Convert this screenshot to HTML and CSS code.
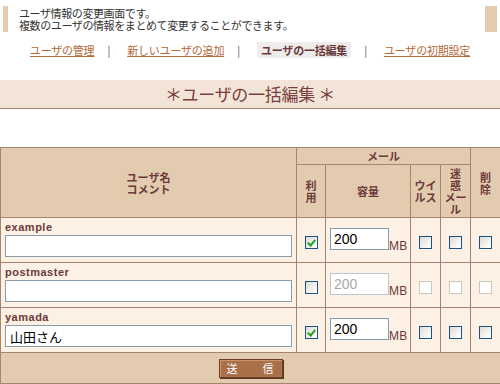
FILE: index.html
```html
<!DOCTYPE html>
<html lang="ja">
<head>
<meta charset="utf-8">
<link rel="stylesheet" href="styles.css">
</head>
<body>
<div class="desc">
  <p>ユーザ情報の変更画面です。<br>複数のユーザの情報をまとめて変更することができます。</p>
</div>
<nav class="nav">
  <a href="#" class="link">ユーザの管理</a><span class="sep">|</span>
  <a href="#" class="link">新しいユーザの追加</a><span class="sep">|</span>
  <span class="current">ユーザの一括編集</span><span class="sep">|</span>
  <a href="#" class="link">ユーザの初期設定</a>
</nav>
<h1 class="title">＊ユーザの一括編集 ＊</h1>
<table class="grid">
  <colgroup>
    <col class="c-name"><col class="c-use"><col class="c-cap"><col class="c-vir"><col class="c-spam"><col class="c-del">
  </colgroup>
  <thead>
    <tr class="h1">
      <th rowspan="2">ユーザ名<br>コメント</th>
      <th colspan="4">メール</th>
      <th rowspan="2">削<br>除</th>
    </tr>
    <tr class="h2">
      <th>利<br>用</th>
      <th>容量</th>
      <th>ウイ<br>ルス</th>
      <th>迷<br>惑<br>メー<br>ル</th>
    </tr>
  </thead>
  <tbody>
    <tr>
      <td class="namecell"><div class="uname">example</div><input class="comment" type="text" value=""></td>
      <td class="ck"><input type="checkbox" checked></td>
      <td class="cap"><input class="capin" type="text" value="200"><span class="mb">MB</span></td>
      <td class="ck"><input type="checkbox"></td>
      <td class="ck"><input type="checkbox"></td>
      <td class="ck"><input type="checkbox"></td>
    </tr>
    <tr>
      <td class="namecell"><div class="uname">postmaster</div><input class="comment" type="text" value=""></td>
      <td class="ck"><input type="checkbox"></td>
      <td class="cap"><input class="capin" type="text" value="200" disabled><span class="mb">MB</span></td>
      <td class="ck"><input type="checkbox" disabled></td>
      <td class="ck"><input type="checkbox" disabled></td>
      <td class="ck"><input type="checkbox" disabled></td>
    </tr>
    <tr>
      <td class="namecell"><div class="uname">yamada</div><input class="comment" type="text" value="山田さん"></td>
      <td class="ck"><input type="checkbox" checked></td>
      <td class="cap"><input class="capin" type="text" value="200"><span class="mb">MB</span></td>
      <td class="ck"><input type="checkbox"></td>
      <td class="ck"><input type="checkbox"></td>
      <td class="ck"><input type="checkbox"></td>
    </tr>
  </tbody>
  <tfoot>
    <tr>
      <td colspan="6" class="foot"><button class="send" type="button">送　　信</button></td>
    </tr>
  </tfoot>
</table>
</body>
</html>
```

FILE: styles.css
```css
html, body {
  margin: 0;
  padding: 0;
  background: #fff;
}
body {
  font-family: "Noto Sans CJK JP", "Liberation Sans", sans-serif;
  font-size: 11px;
  color: #333;
}
.desc {
  margin: 6px 3px 0 3px;
  border-left: 5px solid #e3cbb0;
  border-right: 12px solid #e3cbb0;
  height: 26px;
  padding-left: 11px;
}
.desc p {
  margin: 0;
  padding-top: 1px;
  line-height: 12px;
  font-size: 11px;
  color: #333;
  letter-spacing: -0.4px;
}
.nav {
  display: flex;
  justify-content: center;
  align-items: center;
  margin-top: 10px;
  height: 16px;
  font-size: 11px;
  letter-spacing: -0.2px;
}
.link {
  color: #b5693b;
  text-decoration: underline;
}
.sep {
  color: #555;
  margin: 0 17px 0 13px;
}
.current {
  background: #efedeb;
  color: #6b3a3a;
  font-weight: bold;
  padding: 1px 4px;
  line-height: 14px;
}
.title {
  margin: 22px 0 0 0;
  height: 28px;
  background: #f2e4d6;
  border-bottom: 1px solid #a08a75;
  color: #7a4040;
  font-size: 17px;
  font-weight: normal;
  line-height: 28px;
  text-align: center;
  letter-spacing: -0.3px;
}
.grid {
  margin-top: 38px;
  width: 500px;
  border-collapse: collapse;
  table-layout: fixed;
}
.c-name { width: 296px; }
.c-use { width: 29px; }
.c-cap { width: 85px; }
.c-vir { width: 30px; }
.c-spam { width: 30px; }
.c-del { width: 30px; }
.grid th, .grid td {
  border: 1px solid #a48670;
  padding: 0;
}
.grid th {
  background: #e3cbb0;
  color: #6b3a3a;
  font-size: 11px;
  font-weight: bold;
  line-height: 12px;
  text-align: center;
  vertical-align: middle;
}
.h1 th { height: 16px; }
.h2 th { height: 52px; }
.grid td {
  background: #fdf1e5;
  vertical-align: middle;
  height: 44px;
}
.namecell {
  padding: 0 4px !important;
}
.uname {
  font-family: "Liberation Sans", sans-serif;
  font-weight: bold;
  font-size: 11px;
  letter-spacing: 0.5px;
  color: #6b3a3a;
  line-height: 13px;
  margin-top: -2px;
}
.comment {
  display: block;
  box-sizing: border-box;
  width: 287px;
  height: 22px;
  margin: 1px 0 0 0;
  border: 1px solid #8a9caa;
  padding: 1px 4px;
  font-family: "Noto Sans CJK JP", sans-serif;
  font-size: 13px;
  color: #000;
  background: #fff;
  outline: none;
}
.ck {
  text-align: center;
}
.ck input {
  appearance: none;
  -webkit-appearance: none;
  width: 13px;
  height: 13px;
  margin: 3px 0 0 0;
  box-sizing: border-box;
  border: 1px solid #1c5180;
  background: linear-gradient(135deg, #dcdcd7 0%, #f6f6f3 70%, #fff 100%);
  vertical-align: middle;
  position: relative;
}
.ck input:checked::after {
  content: "";
  position: absolute;
  left: 3px;
  top: 1px;
  width: 3px;
  height: 6px;
  border: solid #21a121;
  border-width: 0 2px 2px 0;
  transform: rotate(40deg);
}
.ck input:disabled {
  border-color: #cac8bb;
  background: #fff;
}
.cap {
  white-space: nowrap;
  padding-left: 4px !important;
}
.capin {
  box-sizing: border-box;
  width: 59px;
  height: 22px;
  margin: 0;
  border: 1px solid #8a9caa;
  padding: 0 3px;
  font-family: "Liberation Sans", sans-serif;
  font-size: 14px;
  color: #000;
  background: #fff;
  vertical-align: middle;
  outline: none;
}
.capin:disabled {
  color: #a9a9a9;
  border-color: #c0c4c8;
}
.mb {
  font-family: "Liberation Sans", sans-serif;
  font-size: 12px;
  color: #6b3a3a;
  vertical-align: -8px;
  letter-spacing: 0.2px;
}
.grid .foot {
  background: #e3cbb0;
  height: 30px;
  text-align: center;
  vertical-align: middle;
}
.send {
  box-sizing: border-box;
  width: 64px;
  height: 19px;
  margin: 0;
  padding: 0;
  background: #a9704a;
  border: 1px solid #6e3f28;
  box-shadow: inset 1px 1px 0 #c9946e, 1px 1px 0 #5a3420;
  color: #fff;
  font-family: "Noto Sans CJK JP", sans-serif;
  font-size: 11px;
  line-height: 17px;
  letter-spacing: 1px;
  vertical-align: middle;
}
```
